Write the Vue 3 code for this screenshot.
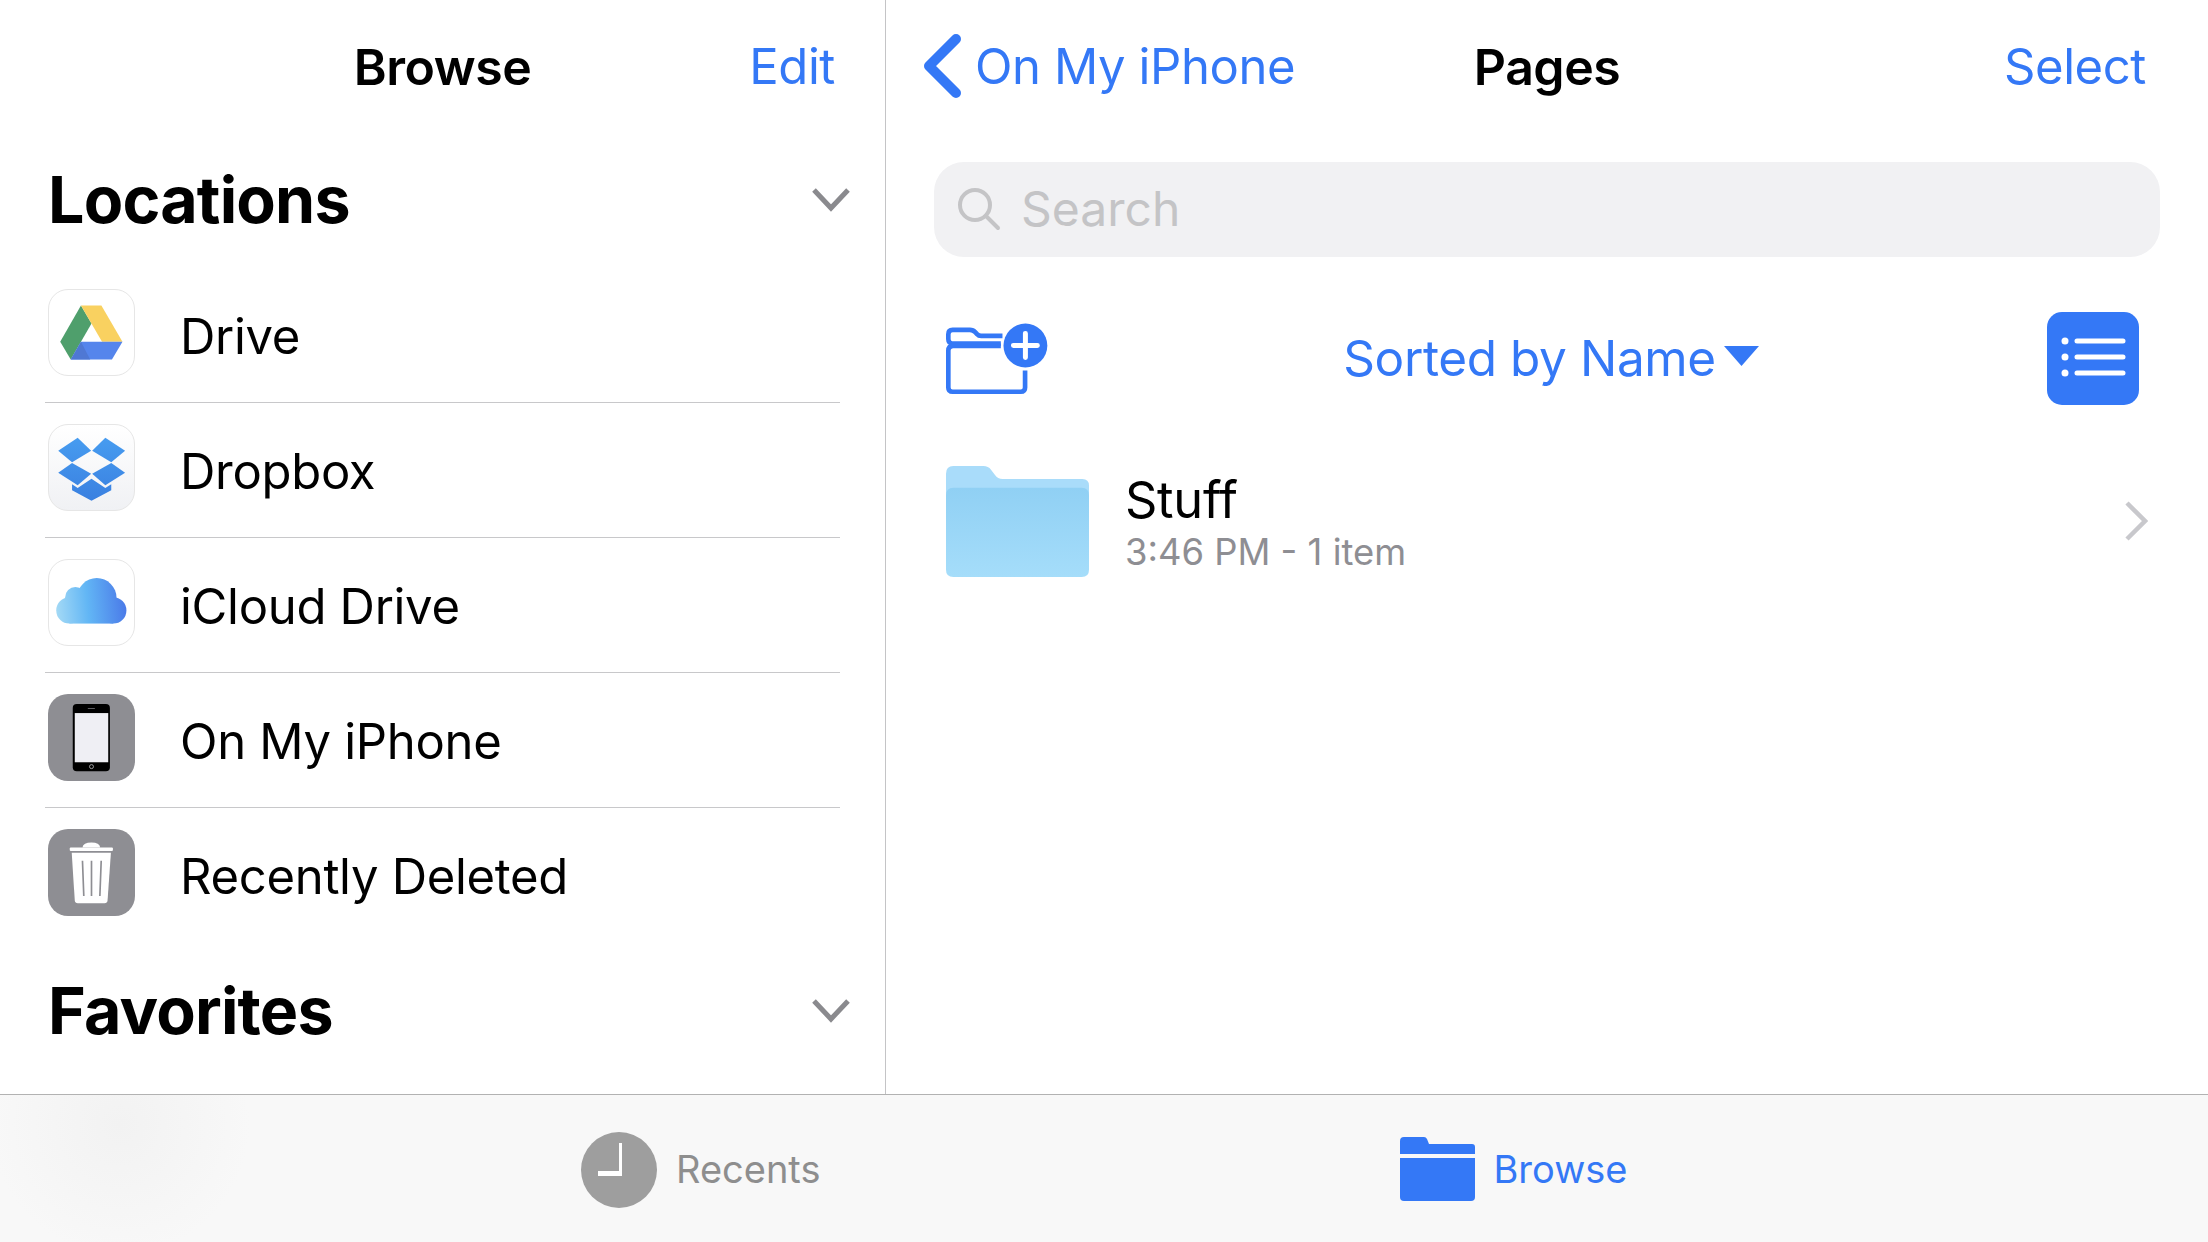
<template>
  <div class="page">
    <div class="panes">
      <!-- left: locations -->
      <aside class="sidebar">
        <header class="side-nav">
          <span></span>
          <h1 class="nav-title">Browse</h1>
          <a class="nav-link side-edit">Edit</a>
        </header>

        <div class="section-head locations-head">
          <h2>Locations</h2>
          <svg class="section-chevron" viewBox="0 0 40 26"><path d="M3 3 L20 21 L37 3" /></svg>
        </div>

        <ul class="locations">
          <li v-for="item in locations" :key="item.name" class="location">
            <span class="loc-icon" :class="item.icon">
              <svg v-if="item.icon === 'drive'" viewBox="0 0 258 258">
                <polygon points="97,47 129,102 66,211 34,157" fill="#4f9f6c" />
                <polygon points="97,47 159,47 223,157 161,157" fill="#f9d160" />
                <polygon points="97,157 223,157 191,211 66,211" fill="#5585ec" />
                <polygon points="97,157 66,211 125,211" fill="#4f78d4" />
              </svg>
              <svg v-else-if="item.icon === 'dropbox'" viewBox="0 0 258 258">
                <defs>
                  <linearGradient id="dropboxBlue" x1="0" y1="39" x2="0" y2="230" gradientUnits="userSpaceOnUse">
                    <stop offset="0" stop-color="#479cf0" />
                    <stop offset="1" stop-color="#3a80e0" />
                  </linearGradient>
                </defs>
                <g fill="url(#dropboxBlue)">
                  <polygon points="87,39 128,78 70,113 28,78" />
                  <polygon points="171,39 131,78 189,113 231,78" />
                  <polygon points="70,115 28,145 87,183 128,148" />
                  <polygon points="189,115 231,145 171,183 131,148" />
                  <polygon points="129,163 171,191 189,180 189,198 129,230 70,198 70,180 87,191" />
                </g>
              </svg>
              <svg v-else-if="item.icon === 'icloud'" viewBox="0 0 258 258">
                <defs>
                  <linearGradient id="cloudBlue" x1="22" y1="150" x2="235" y2="130" gradientUnits="userSpaceOnUse">
                    <stop offset="0" stop-color="#a3d9f5" />
                    <stop offset="0.45" stop-color="#62b6f5" />
                    <stop offset="1" stop-color="#4a79e8" />
                  </linearGradient>
                </defs>
                <g fill="url(#cloudBlue)">
                  <circle cx="62" cy="153" r="40" />
                  <circle cx="80" cy="113" r="31" />
                  <circle cx="145" cy="115" r="60" />
                  <circle cx="195" cy="153" r="40" />
                  <rect x="62" y="120" width="133" height="73" />
                </g>
              </svg>
              <svg v-else-if="item.icon === 'phone'" viewBox="0 0 260 260">
                <rect x="74" y="30" width="111" height="201" rx="12" fill="#000" />
                <rect x="80" y="57" width="100" height="147" fill="#efeff4" />
                <rect x="119" y="42" width="21" height="2" fill="#8e8e93" />
                <circle cx="130" cy="217" r="6" fill="none" stroke="#dcdce0" stroke-width="2" />
              </svg>
              <svg v-else viewBox="0 0 260 260">
                <path d="M103 55 Q105 40 130 40 Q154 40 156 55 Z" fill="#fff" />
                <rect x="65" y="55" width="129" height="11" rx="3" fill="#fff" />
                <path d="M71 71 H188 L178 214 Q177 222 169 222 H89 Q81 222 80 214 Z" fill="#fff" />
                <path d="M103 95 L107 200 M130 95 V200 M159 95 L155 200" stroke="#8e8e93" stroke-width="5" fill="none" />
              </svg>
            </span>
            <span class="loc-name">{{ item.name }}</span>
          </li>
        </ul>

        <div class="section-head favorites-head">
          <h2>Favorites</h2>
          <svg class="section-chevron" viewBox="0 0 40 26"><path d="M3 3 L20 21 L37 3" /></svg>
        </div>
      </aside>

      <!-- right: folder contents -->
      <main class="content">
        <header class="content-nav">
          <a class="nav-link back">
            <svg class="back-chevron" viewBox="0 0 38 64"><path d="M33 5 L6 32 L33 59" /></svg>
            On My iPhone
          </a>
          <h1 class="nav-title">Pages</h1>
          <a class="nav-link select">Select</a>
        </header>

        <div class="search">
          <svg class="search-icon" viewBox="0 0 44 44">
            <circle cx="18" cy="18" r="15" />
            <path d="M29 29 L41 41" stroke-linecap="round" />
          </svg>
          <span>Search</span>
        </div>

        <div class="toolbar">
          <svg class="new-folder" viewBox="78 65 307 215">
            <path class="nf-line" d="M243 126 H100 Q85 126 85 112 V98 Q85 85 98 85 H150 Q160 85 166 92 L172 98 Q176 103 184 103 H248" />
            <path class="nf-line" d="M243 133 H100 Q85 133 85 148 V258 Q85 271 98 271 H303 Q316 271 316 258 V207" />
            <circle cx="317" cy="132" r="66" fill="#3478f6" />
            <path d="M281 132 H353 M317 96 V168" stroke="#fff" stroke-width="15" stroke-linecap="round" />
          </svg>
          <a class="sort">
            Sorted by Name
            <svg class="sort-caret" viewBox="0 0 35 20"><polygon points="0,0 35,0 17.5,20" /></svg>
          </a>
          <button class="list-btn">
            <svg viewBox="0 0 92 93">
              <circle cx="18" cy="29" r="3.5" />
              <circle cx="18" cy="45" r="3.5" />
              <circle cx="18" cy="61" r="3.5" />
              <path d="M30 29 H76 M30 45 H76 M30 61 H76" />
            </svg>
          </button>
        </div>

        <div class="file-row">
          <svg class="folder" viewBox="78 497 429 333">
            <defs>
              <linearGradient id="folderFront" x1="0" y1="0" x2="0" y2="1">
                <stop offset="0" stop-color="#90d0f4" />
                <stop offset="1" stop-color="#a5ddfa" />
              </linearGradient>
            </defs>
            <path d="M78 520 Q78 497 100 497 H190 Q205 497 213 508 L225 524 Q233 536 248 536 H487 Q507 536 507 556 V600 H78 Z" fill="#a9dcfa" />
            <path d="M78 585 Q78 562 100 562 H485 Q507 562 507 585 V808 Q507 830 485 830 H100 Q78 830 78 808 Z" fill="url(#folderFront)" />
          </svg>
          <div class="file-text">
            <div class="file-name">Stuff</div>
            <div class="file-meta">3:46 PM - 1 item</div>
          </div>
          <svg class="row-chevron" viewBox="0 0 24 40"><path d="M3 2 L21 20 L3 38" /></svg>
        </div>
      </main>
    </div>

    <footer class="tabbar">
      <div class="tab recents">
        <svg class="clock" viewBox="0 0 76 76">
          <circle cx="38" cy="38" r="38" fill="#9e9e9e" />
          <path d="M38 11 H41 V44 H17 V39 H38 Z" fill="#fff" />
        </svg>
        <span>Recents</span>
      </div>
      <div class="tab browse">
        <svg class="tab-folder" viewBox="0 0 75 64">
          <path d="M0 17 V4 Q0 0 4 0 H24 Q26 0 27 2 L29 7 H72 Q75 7 75 10 V17 Z" />
          <path d="M0 21 H75 V60 Q75 64 71 64 H4 Q0 64 0 60 Z" />
        </svg>
        <span>Browse</span>
      </div>
    </footer>
  </div>
</template>

<script setup>
const locations = [
  { name: 'Drive', icon: 'drive' },
  { name: 'Dropbox', icon: 'dropbox' },
  { name: 'iCloud Drive', icon: 'icloud' },
  { name: 'On My iPhone', icon: 'phone' },
  { name: 'Recently Deleted', icon: 'trash' }
]
</script>

<style>
html,
body {
  margin: 0;
  background: #fff;
  overflow: hidden;
}
</style>

<style scoped>
.page {
  width: 2208px;
  height: 1242px;
  display: flex;
  flex-direction: column;
  font-family: Inter, "Liberation Sans", sans-serif;
  color: #000;
  background: #fff;
}

.panes {
  height: 1094px;
  display: flex;
}

.sidebar {
  width: 886px;
  box-sizing: border-box;
  border-right: 1px solid #c4c4c6;
}

.side-nav {
  height: 134px;
  display: grid;
  grid-template-columns: 1fr auto 1fr;
  align-items: center;
}

.nav-title {
  margin: 0;
  font-size: 50px;
  font-weight: 600;
  letter-spacing: -0.5px;
}

.nav-link {
  font-size: 49px;
  color: #3478f6;
  letter-spacing: -0.4px;
  padding-bottom: 2px;
}

.side-edit {
  justify-self: end;
  padding-right: 50px;
}

.section-head {
  display: flex;
  align-items: center;
  justify-content: space-between;
  padding: 0 34px 0 48px;
}

.section-head h2 {
  margin: 0;
  font-size: 64.5px;
  font-weight: 700;
  letter-spacing: -0.8px;
}

.locations-head {
  height: 134px;
  box-sizing: border-box;
  padding-bottom: 3px;
}

.favorites-head {
  height: 137px;
  box-sizing: border-box;
  padding-bottom: 2px;
}

.section-chevron {
  width: 40px;
  height: 26px;
  fill: none;
  stroke: #8a8a8e;
  stroke-width: 5;
}

.locations {
  list-style: none;
  margin: 0;
  padding: 0;
}

.location {
  height: 135px;
  box-sizing: border-box;
  margin-left: 45px;
  width: 795px;
  padding: 21px 0 0 3px;
  display: flex;
  gap: 45px;
  border-bottom: 1px solid #c8c8ca;
}

.location:last-child {
  border-bottom: none;
}

.loc-icon {
  width: 87px;
  height: 87px;
  flex: none;
  box-sizing: border-box;
  border-radius: 20px;
  border: 1px solid #e6e6e6;
  background: #fff;
  overflow: hidden;
}

.loc-icon svg {
  display: block;
  width: 100%;
  height: 100%;
}

.loc-icon.dropbox {
  background: linear-gradient(#fff, #f0f1f4);
}

.loc-icon.phone,
.loc-icon.trash {
  background: #8e8e93;
  border: none;
}

.loc-name {
  font-size: 49px;
  line-height: 96px;
  letter-spacing: -0.3px;
}

.content {
  flex: 1;
  padding: 0 48px;
  min-width: 0;
}

.content-nav {
  height: 134px;
  margin: 0 -48px;
  display: grid;
  grid-template-columns: 1fr auto 1fr;
  align-items: center;
}

.back {
  display: flex;
  align-items: center;
  gap: 14px;
  padding-left: 37px;
}

.back-chevron {
  width: 38px;
  height: 64px;
  fill: none;
  stroke: #3478f6;
  stroke-width: 10;
  stroke-linecap: round;
  stroke-linejoin: round;
}

.select {
  justify-self: end;
  padding-right: 62px;
}

.search {
  height: 95px;
  margin: 28px 0 0 0;
  width: 1226px;
  box-sizing: border-box;
  padding: 0 0 2px 23px;
  display: flex;
  align-items: center;
  gap: 20px;
  background: #f1f1f3;
  border-radius: 30px;
  color: #c4c4c6;
  font-size: 48px;
}

.search-icon {
  width: 44px;
  height: 44px;
  fill: none;
  stroke: #c4c4c6;
  stroke-width: 4;
}

.toolbar {
  height: 93px;
  margin-top: 55px;
  width: 1205px;
  display: grid;
  grid-template-columns: 1fr auto 1fr;
  align-items: center;
  box-sizing: border-box;
  padding-left: 12px;
}

.new-folder {
  width: 102px;
  height: 72px;
}

.nf-line {
  fill: none;
  stroke: #3478f6;
  stroke-width: 14;
}

.sort {
  display: flex;
  align-items: center;
  gap: 8px;
  margin-left: 17px;
  padding-bottom: 2px;
  font-size: 49.5px;
  color: #3478f6;
  letter-spacing: -0.4px;
}

.sort-caret {
  width: 35px;
  height: 20px;
  fill: #3478f6;
  margin-top: -3px;
}

.list-btn {
  justify-self: end;
  width: 92px;
  height: 93px;
  padding: 0;
  border: none;
  border-radius: 15px;
  background: #3478f6;
}

.list-btn svg {
  display: block;
  width: 92px;
  height: 93px;
  fill: #fff;
  stroke: #fff;
}

.list-btn path {
  stroke-width: 5;
  stroke-linecap: round;
}

.list-btn circle {
  stroke: none;
}

.file-row {
  margin-top: 61px;
  width: 1214px;
  height: 111px;
  display: flex;
  align-items: center;
  box-sizing: border-box;
  padding-left: 12px;
}

.folder {
  width: 143px;
  height: 111px;
  flex: none;
}

.file-text {
  margin-left: 36px;
  flex: 1;
}

.file-name {
  font-size: 50.5px;
  line-height: 60px;
  letter-spacing: -0.3px;
}

.file-meta {
  font-size: 36.4px;
  line-height: 42px;
  padding-top: 1px;
  color: #8e8e93;
}

.row-chevron {
  width: 24px;
  height: 40px;
  margin-bottom: 2px;
  fill: none;
  stroke: #c8c8cc;
  stroke-width: 4.5;
}

.tabbar {
  height: 148px;
  box-sizing: border-box;
  border-top: 1px solid #b2b2b2;
  background: radial-gradient(circle at 120px 30px, #f2f2f2, #f8f8f8 130px);
  display: flex;
  align-items: center;
  font-size: 38px;
}

.tab {
  display: flex;
  align-items: center;
  gap: 19px;
}

.recents {
  margin-left: 581px;
  color: #8e8e8e;
}

.browse {
  margin-left: 579px;
  color: #3478f6;
}

.clock {
  width: 76px;
  height: 76px;
  margin-top: 2px;
}

.tab-folder {
  width: 75px;
  height: 64px;
  margin-top: 1px;
  fill: #3478f6;
}
</style>
